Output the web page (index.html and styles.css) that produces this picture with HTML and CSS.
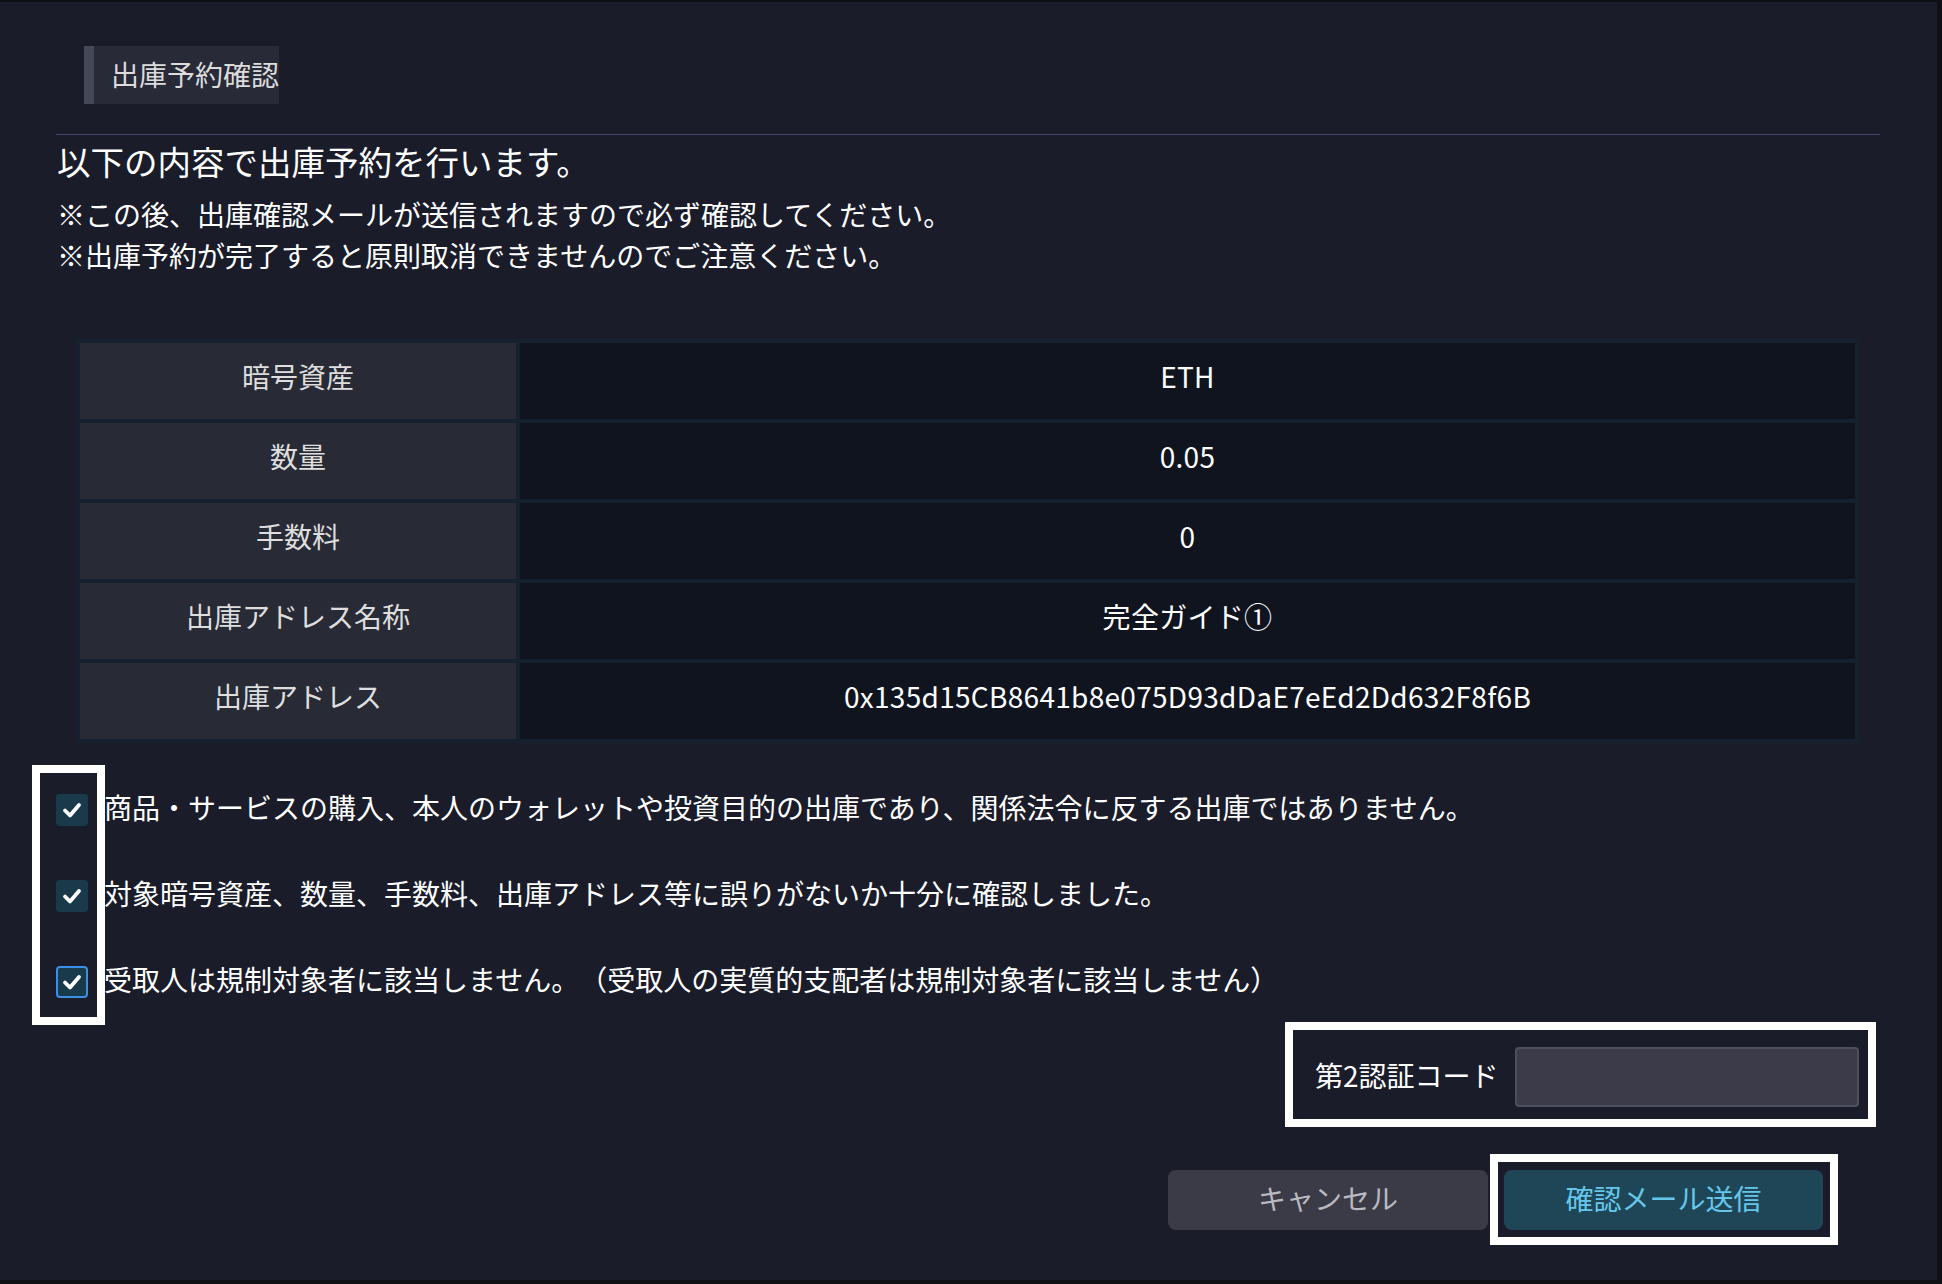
FILE: index.html
```html
<!doctype html>
<html lang="ja">
    <head>
        <meta charset="utf-8">
        <title>出庫予約確認</title>
        <meta name="viewport" content="width=device-width, initial-scale=1">
        <link rel="stylesheet" href="styles.css">
    </head>
    <body>
        <div class="dialog">
            <div class="title">出庫予約確認</div>
            <div class="rule"></div>

            <div class="lead">
                <h1>以下の内容で出庫予約を行います。</h1>
                <p>※この後、出庫確認メールが送信されますので必ず確認してください。</p>
                <p>※出庫予約が完了すると原則取消できませんのでご注意ください。</p>
            </div>

            <table class="summary">
                <tr><th>暗号資産</th><td>ETH</td></tr>
                <tr><th>数量</th><td>0.05</td></tr>
                <tr><th>手数料</th><td>0</td></tr>
                <tr><th>出庫アドレス名称</th><td>完全ガイド①</td></tr>
                <tr><th>出庫アドレス</th><td>0x135d15CB8641b8e075D93dDaE7eEd2Dd632F8f6B</td></tr>
            </table>

            <div class="checks">
                <label class="check-row">
                    <span class="cb"><svg viewBox="0 0 32 32"><polyline points="9,16.5 14,21.5 23,11"/></svg></span>
                    <span class="check-text">商品・サービスの購入、本人のウォレットや投資目的の出庫であり、関係法令に反する出庫ではありません。</span>
                </label>
                <label class="check-row">
                    <span class="cb"><svg viewBox="0 0 32 32"><polyline points="9,16.5 14,21.5 23,11"/></svg></span>
                    <span class="check-text">対象暗号資産、数量、手数料、出庫アドレス等に誤りがないか十分に確認しました。</span>
                </label>
                <label class="check-row">
                    <span class="cb focus"><svg viewBox="0 0 32 32"><polyline points="9,16.5 14,21.5 23,11"/></svg></span>
                    <span class="check-text">受取人は規制対象者に該当しません。（受取人の実質的支配者は規制対象者に該当しません）</span>
                </label>
                <div class="mark"></div>
            </div>

            <div class="tfa">
                <div class="tfa-box">
                    <span class="tfa-label">第2認証コード</span>
                    <input class="tfa-input" type="text">
                </div>
            </div>

            <div class="actions">
                <button class="btn cancel">キャンセル</button>
                <span class="hl"><button class="btn send">確認メール送信</button></span>
            </div>
        </div>
    </body>
</html>
```

FILE: styles.css
```css
/* base */
html, body { font-family: "Noto Sans CJK JP", "Noto Sans", sans-serif; text-spacing-trim: space-all; }
body { margin: 0; background: #0e1016; }
h1, p { margin: 0; font-weight: normal; }

.dialog {
    width: 1937px;
    height: 1280px;
    padding-top: 44px;
    box-sizing: border-box;
    border-top: 2px solid #0e1016;
    background: #1a1c29;
    overflow: hidden;
}

/* header */
.title {
    display: inline-flex;
    align-items: center;
    height: 58px;
    margin-left: 84px;
    padding: 0 0 2px 17px;
    box-sizing: border-box;
    background: #282a38;
    border-left: 10px solid #454857;
    font-size: 28px;
    color: #dcdcdc;
}
.rule { height: 1px; width: 1824px; margin: 30px 0 0 56px; background: #43456f; }

.lead { padding-left: 57px; color: #fff; }
.lead h1 { font-size: 33.5px; line-height: 42px; margin: 5px 0 11px; }
.lead p { font-size: 28px; line-height: 42px; }
.lead p + p { margin-top: -1px; }

/* summary table */
.summary {
    margin: 63px 0 0 76px;
    width: 1783px;
    border-collapse: separate;
    border-spacing: 4px;
    background: #17202e;
    font-size: 28px;
}
.summary th, .summary td { height: 66px; padding: 0 0 10px; text-align: center; font-weight: normal; }
.summary th { width: 436px; background: #282b35; color: #dedede; }
.summary td { background: #10141e; color: #fff; letter-spacing: 0.3px; }

/* agreement checks */
.checks { position: relative; margin-top: 24px; padding-left: 56px; }
.check-row { display: flex; align-items: center; gap: 16px; height: 86px; font-size: 28px; color: #fff; }
.check-text { line-height: 34px; padding-bottom: 6px; }
.cb {
    width: 32px; height: 32px; flex: none;
    box-sizing: border-box;
    border-radius: 4px;
    background: #193a4a;
    display: flex;
}
.cb.focus { border: 2px solid #3a8fe6; }
.cb svg { width: 32px; height: 32px; flex: none; }
.cb.focus svg { margin: -2px; }
.cb polyline { fill: none; stroke: #fff; stroke-width: 3.8; stroke-linecap: round; stroke-linejoin: round; }
.mark {
    position: absolute;
    left: 32px; top: -2px;
    width: 73px; height: 260px;
    box-sizing: border-box;
    border: 8px solid #fff;
}

/* 2fa */
.tfa { display: flex; justify-content: flex-end; padding-right: 61px; margin-top: -3px; }
.tfa-box {
    display: flex;
    align-items: center;
    width: 591px;
    box-sizing: border-box;
    border: 8px solid #fff;
    padding: 17px 9px 12px 22px;
}
.tfa-label { flex: 1; font-size: 28px; color: #fff; padding-bottom: 4px; }
.tfa-input {
    flex: none;
    width: 344px; height: 60px;
    box-sizing: border-box;
    background: #3b3b4a;
    border: 2px solid #4e4e60;
    border-radius: 4px;
}

/* buttons */
.actions { display: flex; justify-content: flex-end; align-items: center; gap: 2px; padding-right: 99px; margin-top: 27px; }
.btn {
    width: 320px; height: 60px;
    padding: 0 0 4px;
    border: 0;
    border-radius: 8px;
    font-family: inherit;
    font-size: 28px;
}
.btn.cancel { background: #3b3b47; color: #b9b9c0; }
.btn.send { width: 319px; background: #1e4657; color: #66c6ea; }
.hl { display: flex; border: 8px solid #fff; padding: 8px 7px 7px 6px; }
```
